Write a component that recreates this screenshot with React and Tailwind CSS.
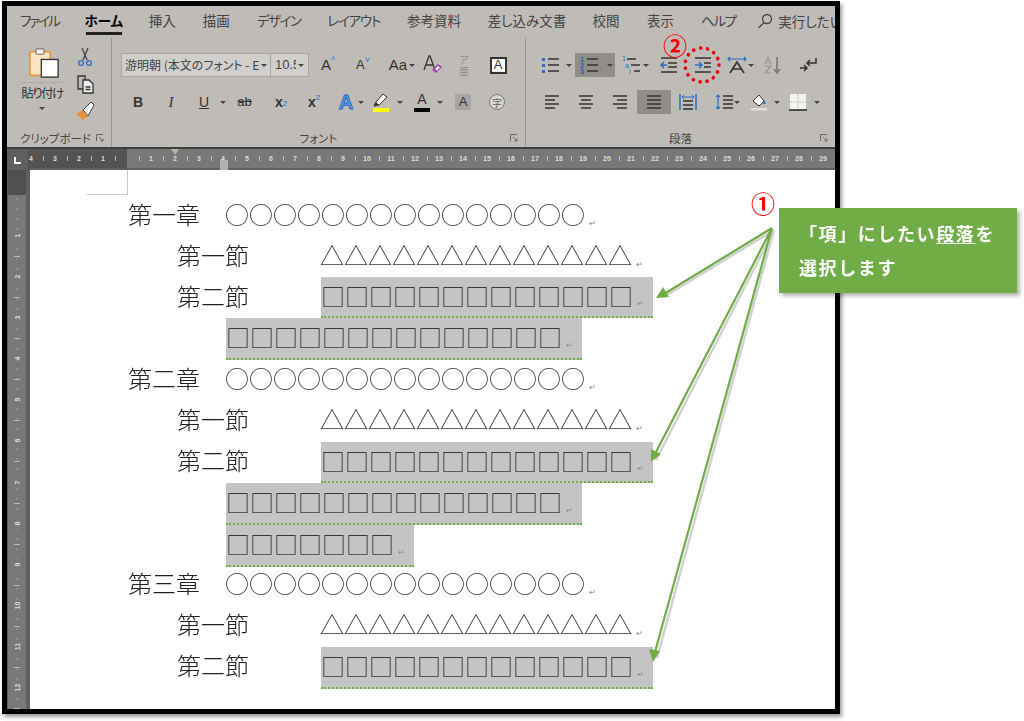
import React from 'react';

const ui = "font-['Noto_Sans_CJK_JP','Noto_Sans',sans-serif] [font-feature-settings:'palt']";

const tabs = [
  ['ファイル', 'w-[39px] tracking-[-2px]'],
  ['ホーム', 'w-[36px] font-bold text-black border-b-[3px] border-[#222]'],
  ['挿入', 'w-[27px]'],
  ['描画', 'w-[27px]'],
  ['デザイン', 'w-[44px] tracking-[-1.5px]'],
  ['レイアウト', 'w-[52px] tracking-[-1.2px]'],
  ['参考資料', 'w-[55px]'],
  ['差し込み文書', 'w-[77px]'],
  ['校閲', 'w-[27px]'],
  ['表示', 'w-[28px]'],
  ['ヘルプ', 'w-[34px] tracking-[-1.3px]'],
];

const rulerNums = [4, 3, 2, 1, '', 1, 2, 3, 4, 5, 6, 7, 8, 9, 10, 11, 12, 13, 14, 15, 16, 17, 18, 19, 20, 21, 22, 23, 24, 25, 26, 27, 28, 29];
const sideNums = [1, 2, 3, 4, 5, 6, 7, 8, 9, 10, 11, 12];

function Caret({ className = '' }) {
  return <span className={`block w-0 h-0 shrink-0 border-x-[3px] border-t-[3px] border-x-transparent border-t-[#444] ${className}`} />;
}

function Ico({ children, className = '' }) {
  return (
    <svg viewBox="0 0 20 20" fill="none" stroke="#333" strokeWidth="1.5" className={`w-5 h-5 shrink-0 ${className}`}>
      {children}
    </svg>
  );
}

function AlignIcon({ lines }) {
  return (
    <Ico>
      {lines.map(([a, b], i) => <path key={i} d={`M${a} ${4 + i * 4}H${b}`} />)}
    </Ico>
  );
}

function BulletIcon() {
  return (
    <Ico>
      <path d="M8 4h11M8 10h11M8 16h11" />
      <path d="M2 3h3v3H2zM2 9h3v3H2zM2 15h3v3H2z" fill="#2b6fc4" stroke="none" />
    </Ico>
  );
}

function NumberIcon() {
  return (
    <Ico>
      <path d="M8 4h11M8 10h11M8 16h11" />
      <g fill="#1f5fb0" stroke="none" fontSize="7" fontWeight="700" fontFamily="Liberation Sans, sans-serif">
        <text x="1" y="6.500">1</text>
        <text x="1" y="12.500">2</text>
        <text x="1" y="18.500">3</text>
      </g>
    </Ico>
  );
}

function LevelIcon() {
  return (
    <Ico>
      <path d="M5 4h9M9 10h9M12 16h6" />
      <g fill="#2b6fc4" stroke="none" fontSize="7" fontFamily="Liberation Sans, sans-serif">
        <text x="0" y="6">1</text>
        <text x="3" y="12.500">a</text>
        <text x="7" y="18.500">i</text>
      </g>
    </Ico>
  );
}

function Letter({ children, className = '' }) {
  return <span className={`flex items-center justify-center font-['Liberation_Sans',sans-serif] text-[#333] ${className}`}>{children}</span>;
}

function GroupLabel({ children, className = '' }) {
  return (
    <div className={`h-[22px] pt-[6px] relative flex items-center justify-center text-[11.5px] text-[#444] ${className}`}>
      {children}
      <svg viewBox="0 0 8 8" className="w-2 h-2 absolute right-[7px] top-[9px]" fill="none" stroke="#666">
        <path d="M.5 7V.5H7" />
        <path d="M3 3l4 4M7 4.500V7H4.500" />
      </svg>
    </div>
  );
}

function ClipboardGroup() {
  return (
    <div className="w-[105px] shrink-0 flex flex-col border-r border-[#9a9793]">
      <div className="flex-1 flex">
        <div className="w-[61px] pl-[9px] pt-[8px] flex flex-col items-center">
          <svg viewBox="0 0 34 34" className="w-[30px] h-[34px] ml-[4px]">
            <rect x="1" y="4" width="23" height="27" rx="1" fill="#fbe3c0" stroke="#e49a3c" strokeWidth="2" />
            <rect x="8" y="1" width="9" height="6" rx="1" fill="#f4f4f4" stroke="#555" />
            <rect x="14" y="13" width="19" height="20" fill="#fff" stroke="#333" strokeWidth="1.5" />
          </svg>
          <span className="mt-[2px] pt-[1px] border-t border-[#aaa] text-[12.5px] tracking-[-1.5px] text-[#333] whitespace-nowrap leading-[18px]">貼り付け</span>
          <Caret className="mt-[5px]" />
        </div>
        <div className="flex flex-col items-center pl-[7px] pt-[9px] gap-[7px]">
          <svg viewBox="0 0 20 20" className="w-5 h-5" fill="none" strokeWidth="1.3">
            <path d="M7 1l5 12M13 1L8 13" stroke="#444" />
            <circle cx="6" cy="16" r="2.400" stroke="#2b6fc4" />
            <circle cx="14" cy="16" r="2.400" stroke="#2b6fc4" />
          </svg>
          <svg viewBox="0 0 20 20" className="w-5 h-5" fill="none" stroke="#333" strokeWidth="1.3">
            <path d="M3 2h7v13H3z" />
            <path d="M8 6h6l4 4v9H8z" fill="#eee" />
            <path d="M10.500 13h5M10.500 15.500h5" />
          </svg>
          <svg viewBox="0 0 20 20" className="w-5 h-5">
            <path d="M1 13l7-4 5 6-5 4z" fill="#e8943a" />
            <path d="M8 9l8-8 3 3-6 11z" fill="#fff" stroke="#444" />
          </svg>
        </div>
      </div>
      <GroupLabel className="justify-start pl-[13px]">クリップボード</GroupLabel>
    </div>
  );
}

function FontGroup() {
  return (
    <div className="w-[414px] shrink-0 flex flex-col border-r border-[#9a9793]">
      <div className="flex-1 flex flex-col pl-[9px] pt-[15px] gap-[13px]">
        <div className="h-[24px] flex items-center">
          <div className="w-[150px] h-[24px] flex items-center justify-between px-[3px] bg-[#d1cfcc] border border-[#a9a6a2] text-[12px] text-[#444] whitespace-nowrap overflow-hidden">
            <span className="overflow-hidden">游明朝 (本文のフォント - E</span>
            <Caret />
          </div>
          <div className="w-[38px] h-[24px] flex items-center justify-between px-[4px] bg-[#d1cfcc] border-y border-r border-[#a9a6a2] text-[13px] text-[#444] font-['Liberation_Sans',sans-serif] overflow-hidden">
            <span className="w-[21px] overflow-hidden whitespace-nowrap">10.5</span>
            <Caret />
          </div>
          <Letter className="w-[34px] ml-[2px] text-[15px]">A<span className="text-[9px] text-[#2b6fc4] -mt-[8px]">^</span></Letter>
          <Letter className="w-[36px] text-[13px]">A<span className="text-[9px] text-[#2b6fc4] -mt-[8px]">˅</span></Letter>
          <Letter className="w-[38px] pl-[4px] text-[15px] gap-[2px]">Aa<Caret /></Letter>
          <div className="w-[28px] flex justify-center">
            <svg viewBox="0 0 20 20" className="w-5 h-5">
              <path d="M1 15L6 1h1l5 14M3 10h7" fill="none" stroke="#333" strokeWidth="1.3" />
              <path d="M9 15l6-6 4 3-6 6z" fill="#a23fb0" />
              <path d="M12 14l3-3 2 1.500-3 3z" fill="#fff" />
            </svg>
          </div>
          <div className="w-[34px] flex justify-center">
            <span className="w-[11px] break-all text-center text-[10px] leading-[11px] text-[#8f8c88]">ア亜</span>
          </div>
          <Letter className="w-[34px]">
            <span className="w-[17px] h-[17px] flex items-center justify-center bg-white border-2 border-[#333] text-[13px]">A</span>
          </Letter>
        </div>
        <div className="h-[24px] flex items-center">
          <Letter className="w-[34px] text-[14px] font-bold">B</Letter>
          <span className="w-[32px] text-center font-['Liberation_Serif',serif] italic text-[15px] text-[#333]">I</span>
          <Letter className="w-[34px] text-[14px] underline">U</Letter>
          <Caret className="-ml-[1px]" />
          <Letter className="w-[39px] ml-[-1px] text-[13px] line-through">ab</Letter>
          <Letter className="w-[34px] text-[14px] font-bold">x<sub className="text-[8px] text-[#2b6fc4] font-normal">2</sub></Letter>
          <Letter className="w-[32px] text-[14px] font-bold">x<sup className="text-[8px] text-[#2b6fc4] font-normal">2</sup></Letter>
          <Letter className="w-[24px] ml-[4px] text-[20px] font-bold !text-[#5b9bd5] [-webkit-text-stroke:1px_#2b6fc4]">A</Letter>
          <Caret />
          <div className="ml-[5px] w-[24px] flex flex-col items-center">
            <svg viewBox="0 0 20 15" className="w-[20px] h-[15px]">
              <path d="M3 13l2-4 7-8 4 3-8 8z" fill="#fff" stroke="#333" />
              <path d="M3 13l2-4 3 3z" fill="#333" />
            </svg>
            <span className="block w-[16px] h-[4px] bg-[#ffff00]" />
          </div>
          <Caret className="ml-[4px]" />
          <div className="ml-[7px] w-[24px] flex flex-col items-center">
            <Letter className="h-[14px] text-[14px]">A</Letter>
            <span className="block w-[16px] h-[4px] mt-[1px] bg-black" />
          </div>
          <Caret className="ml-[3px]" />
          <div className="ml-[12px] w-[16px] h-[16px] flex items-center justify-center bg-[#a7a5a2] text-[13px] text-[#333] font-['Liberation_Sans',sans-serif]">A</div>
          <div className="ml-[18px] w-[16px] h-[16px] rounded-full flex items-center justify-center bg-[#d8d6d3] border border-[#777] text-[10px] text-[#666]">字</div>
        </div>
      </div>
      <GroupLabel>フォント</GroupLabel>
    </div>
  );
}

function ParagraphGroup() {
  return (
    <div className="flex-1 flex flex-col">
      <div className="flex-1 flex flex-col pt-[15px] gap-[13px]">
        <div className="h-[24px] flex items-center">
          <div className="ml-[14px]"><BulletIcon /></div>
          <Caret className="ml-[6px]" />
          <div className="ml-[3px] w-[40px] h-[24px] flex items-center pl-[4px] gap-[2px] bg-[#918e8a]">
            <NumberIcon />
            <Caret className="ml-[6px]" />
          </div>
          <div className="ml-[7px]"><LevelIcon /></div>
          <Caret className="ml-[1px]" />
          <div className="ml-[10px]">
            <Ico>
              <path d="M2 3h16M9 8h9M9 12h9M2 17h16" />
              <path d="M8 10H2M5 7l-3 3 3 3" stroke="#2b6fc4" />
            </Ico>
          </div>
          <div className="ml-[14px]">
            <Ico>
              <path d="M2 3h16M11 8h7M11 12h7M2 17h16" />
              <path d="M2 10h7M6 7l3 3-3 3" stroke="#2b6fc4" />
            </Ico>
          </div>
          <div className="ml-[14px] relative">
            <Ico>
              <path d="M3 18l7-11 7 11M6 14h8" strokeWidth="1.7" />
              <path d="M1 4h18M3 2L1 4l2 2M17 2l2 2-2 2" stroke="#2b6fc4" strokeWidth="1.200" />
            </Ico>
          </div>
          <Caret className="ml-[1px]" />
          <div className="ml-[9px]">
            <Ico>
              <path d="M2 9l3-7 3 7M3 7h4M2 11h6l-6 7h6" stroke="#9a9793" strokeWidth="1.200" />
              <path d="M14 2v16M11 14l3 4 3-4" stroke="#777" />
            </Ico>
          </div>
          <div className="ml-[15px]">
            <Ico>
              <path d="M18 3v5h-9M12 5L9 8l3 3" />
              <path d="M2 13h7M6 10l3 3-3 3" />
            </Ico>
          </div>
        </div>
        <div className="h-[24px] flex items-center">
          <div className="ml-[16px]"><AlignIcon lines={[[3, 17], [3, 13], [3, 17], [3, 13]]} /></div>
          <div className="ml-[14px]"><AlignIcon lines={[[3, 17], [5, 15], [3, 17], [5, 15]]} /></div>
          <div className="ml-[14px]"><AlignIcon lines={[[3, 17], [7, 17], [3, 17], [7, 17]]} /></div>
          <div className="ml-[7px] w-[34px] h-[24px] flex items-center justify-center bg-[#918e8a]">
            <AlignIcon lines={[[3, 17], [3, 17], [3, 17], [3, 17]]} />
          </div>
          <div className="ml-[7px]">
            <Ico>
              <path d="M2 2v16M18 2v16" stroke="#2b6fc4" />
              <path d="M5 9h10M5 13h10M5 17h10" />
              <path d="M4 5h12M6 3L4 5l2 2M14 3l2 2-2 2" stroke="#2b6fc4" strokeWidth="1" />
            </Ico>
          </div>
          <div className="ml-[16px]">
            <Ico>
              <path d="M9 4h10M9 8h10M9 12h10M9 16h10" />
              <path d="M4 3v14M2 5l2-2 2 2M2 15l2 2 2-2" stroke="#2b6fc4" strokeWidth="1.200" />
            </Ico>
          </div>
          <Caret className="ml-[0px]" />
          <div className="ml-[9px]">
            <svg viewBox="0 0 20 20" className="w-5 h-5">
              <path d="M4 9l6-6 5 6-5 5z" fill="#fff" stroke="#333" />
              <path d="M15 8l2 4h-3z" fill="#2b6fc4" />
              <rect x="2" y="16" width="16" height="2.500" fill="#ddd" />
            </svg>
          </div>
          <Caret className="ml-[5px]" />
          <div className="ml-[8px]">
            <svg viewBox="0 0 20 20" className="w-5 h-5">
              <rect x="2" y="2" width="16" height="16" fill="#f4f4f4" />
              <path d="M10 2v16M2 10h16" stroke="#bbb" strokeDasharray="2 1" />
              <path d="M1 18h18" stroke="#222" strokeWidth="1.500" />
            </svg>
          </div>
          <Caret className="ml-[6px]" />
        </div>
      </div>
      <GroupLabel>段落</GroupLabel>
    </div>
  );
}

function TopRuler() {
  return (
    <div className="h-[23px] shrink-0 flex bg-[#5b5b5b] border-t-2 border-[#3f3f3f] relative">
      <div className="w-[22px] shrink-0 flex items-center justify-center bg-[#5f5f5f] border-r border-[#4a4a4a]">
        <span className="block w-[7px] h-[7px] mt-[2px] border-l-2 border-b-2 border-white" />
      </div>
      <div className="flex-1 bg-[linear-gradient(90deg,#535353_98px,#787878_98px)] border-b-2 border-[#5f5f5f] flex items-center overflow-hidden">
        <div className="flex -ml-[4px]">
          {rulerNums.map((n, i) => (
            <div key={i} className="w-[24px] shrink-0 flex items-center text-[7px] leading-none font-bold text-[#dedede] font-['Liberation_Sans',sans-serif]">
              <span className="w-[12px] text-center">{n}</span>
              <span className="w-[12px] flex justify-center"><i className="block w-px h-[5px] bg-[#bdbdbd]" /></span>
            </div>
          ))}
        </div>
      </div>
      <span className="absolute left-[164px] top-0 w-0 h-0 border-x-[4px] border-t-[6px] border-x-transparent border-t-[#b5b2ae]" />
      <span className="absolute left-[213px] top-[11px] w-[8px] h-[10px] bg-[#b5b2ae]" />
    </div>
  );
}

function SideRuler() {
  return (
    <div className="w-[23px] shrink-0 bg-[#5f5f5f] pl-[1px] pr-[4px]">
      <div className="h-[25px] bg-[#505050]" />
      <div className="h-[517px] overflow-hidden bg-[#787878] bg-[linear-gradient(#a8a8a8_1px,transparent_1px)] bg-[length:2px_10px] bg-center bg-repeat-y flex flex-col items-center pt-[35px]">
        {sideNums.map(n => (
          <div key={n} className="h-[41.100px] shrink-0 flex flex-col items-center">
            <span className="h-[11px] w-[11px] flex items-center justify-center bg-[#787878] -rotate-90 text-[7px] leading-none font-bold text-[#dedede] font-['Liberation_Sans',sans-serif]">{n}</span>
            <i className="block w-[6px] h-px mt-[15px] bg-[#bdbdbd]" />
          </div>
        ))}
      </div>
    </div>
  );
}

function Mark() {
  return <span className="ml-[4px] self-end mb-[8px] text-[8px] leading-none text-[#888] font-['Liberation_Sans',sans-serif]">↵</span>;
}

function DocRow({ label, glyph, count, start, selected, box = 'h-[41px]' }) {
  const text = glyph.repeat(count);
  const cls = selected
    ? `ml-[1px] self-start bg-[#c4c4c4] border-b-2 border-dotted border-[#70ad47] ${box}`
    : 'h-[41px]';
  return (
    <div className="h-[41px] flex items-center">
      {label ? (
        <div className={`whitespace-nowrap pb-[4px] will-change-transform ${start}`}>{label}</div>
      ) : (
        <div className={start} />
      )}
      <div className={`flex items-center ${cls}`}>
        <span className={`whitespace-nowrap will-change-transform ${selected ? 'pb-[2px] font-normal text-[#3a3a3a]' : 'pb-[4px] text-[#333]'}`}>{text}</span>
        <Mark />
      </div>
    </div>
  );
}

function Doc() {
  const c = 'w-[97px] ml-[98px]';
  const s = 'w-[143px] ml-[147px]';
  const n = 'ml-[195px]';
  return (
    <div className="flex-1 bg-white relative pt-[25px] font-light text-[24px] text-[#222] font-['Noto_Sans_CJK_JP',sans-serif]">
      <div className="absolute left-[57px] top-0 w-[41px] h-[25px] border-r border-b border-[#c8c8c8]" />
      <DocRow label="第一章" glyph="○" count={15} start={c} />
      <DocRow label="第一節" glyph="△" count={13} start={s} />
      <DocRow label="第二節" glyph="□" count={13} start={s} selected box="w-[332px] h-[41px]" />
      <DocRow glyph="□" count={14} start={n} selected box="w-[356px] h-[42px]" />
      <DocRow label="第二章" glyph="○" count={15} start={c} />
      <DocRow label="第一節" glyph="△" count={13} start={s} />
      <DocRow label="第二節" glyph="□" count={13} start={s} selected box="w-[332px] h-[41px] mt-[1px]" />
      <DocRow glyph="□" count={14} start={n} selected box="w-[356px] h-[42px] mt-[1px]" />
      <DocRow glyph="□" count={7} start={n} selected box="w-[188px] h-[42px] mt-[2px]" />
      <DocRow label="第三章" glyph="○" count={15} start={c} />
      <DocRow label="第一節" glyph="△" count={13} start={s} />
      <DocRow label="第二節" glyph="□" count={13} start={s} selected box="w-[332px] h-[42px] mt-[1px]" />
    </div>
  );
}

function Annotations() {
  return (
    <>
      <svg viewBox="0 0 1024 721" className="absolute inset-0 w-[1024px] h-[721px] pointer-events-none">
        <g stroke="#000" strokeOpacity="0.18" strokeWidth="2.500" fill="none" transform="translate(2 2)">
          <path d="M772 228L660 296M772 228L654 458M772 228L655 656" />
        </g>
        <g stroke="#70ad47" strokeWidth="2.200" fill="none">
          <path d="M772 228L664 294M772 228L655 454M772 228L655 652" />
        </g>
        <g fill="#70ad47">
          <path d="M656 298l13-1-6-10z" />
          <path d="M651 462l10-8-10-5z" />
          <path d="M653 662l7-11-11-2z" />
        </g>
        <circle cx="702" cy="65" r="17" fill="none" stroke="#e8000b" strokeWidth="3.600" strokeLinecap="round" strokeDasharray="0.1 7" />
      </svg>
      <span className="absolute left-[662px] top-[30px] w-[26px] text-center text-[24px] leading-[30px] font-bold text-[#f00] font-['Noto_Sans_CJK_JP',sans-serif]">②</span>
      <span className="absolute left-[750px] top-[188px] w-[26px] text-center text-[24px] leading-[30px] font-bold text-[#f00] font-['Noto_Sans_CJK_JP',sans-serif]">①</span>
      <div className="absolute left-[779px] top-[208px] w-[238px] h-[85px] pl-[20px] pt-[8px] bg-[#70ad47] shadow-[3px_3px_4px_rgba(0,0,0,0.3)] text-white font-bold text-[18px] leading-[34px] tracking-[1.6px] font-['Noto_Sans_CJK_JP',sans-serif]">
        <div className="whitespace-nowrap">「項」にしたい<span className="underline underline-offset-2">段落</span>を</div>
        <div className="whitespace-nowrap">選択します</div>
      </div>
    </>
  );
}

export default function App() {
  return (
    <div className="relative w-[1024px] h-[721px] bg-white overflow-hidden">
      <div className={`ml-[2px] mt-[1px] w-[838px] h-[713px] border-[5px] border-black flex flex-col overflow-hidden shadow-[2px_3px_4px_rgba(0,0,0,0.4)] ${ui}`}>
        <div className="h-[32px] shrink-0 flex items-center pl-[13px] gap-[27px] bg-[#bfbbb7] text-[13.5px] text-[#444] whitespace-nowrap">
          {tabs.map(([t, cls]) => (
            <div key={t} className={`h-[24px] mt-[2px] flex justify-center leading-[18px] ${cls}`}>{t}</div>
          ))}
          <div className="flex items-center -ml-[5px] -mt-[2px] gap-[5px] w-[78px] overflow-hidden">
            <svg viewBox="0 0 16 16" className="w-4 h-4 shrink-0" fill="none" stroke="#444" strokeWidth="1.300">
              <circle cx="10" cy="6" r="4.500" />
              <path d="M7 9.500L1.500 15" />
            </svg>
            <span>実行したい</span>
          </div>
        </div>
        <div className="h-[109px] shrink-0 flex bg-[#bfbbb7]">
          <ClipboardGroup />
          <FontGroup />
          <ParagraphGroup />
        </div>
        <TopRuler />
        <div className="flex-1 flex min-h-0">
          <SideRuler />
          <Doc />
        </div>
      </div>
      <Annotations />
    </div>
  );
}
